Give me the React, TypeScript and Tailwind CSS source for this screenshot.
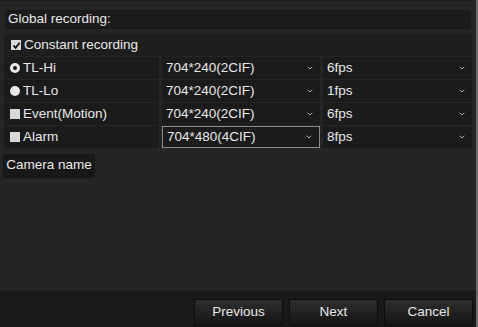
import { ChevronDown } from "lucide-react";

function Box({ checked }: { checked?: boolean }) {
  return (
    <span className="w-[10px] h-[10px] bg-[#d8d8d8] flex items-center justify-center shrink-0">
      {checked && (
        <svg width="9" height="9" viewBox="0 0 9 9">
          <path d="M1.5 4.5 L3.6 6.8 L7.6 1.8" stroke="#111" strokeWidth="1.8" fill="none" />
        </svg>
      )}
    </span>
  );
}

function Radio({ on }: { on?: boolean }) {
  return on ? (
    <span className="w-[10px] h-[10px] rounded-full bg-[#e8e8e8] flex items-center justify-center shrink-0">
      <span className="w-[4px] h-[4px] rounded-full bg-[#151515]" />
    </span>
  ) : (
    <span className="w-[10px] h-[10px] rounded-full bg-[#e8e8e8] shrink-0" />
  );
}

function Select({ value, active }: { value: string; active?: boolean }) {
  return (
    <div
      className={
        "h-full flex items-center justify-between pl-[4px] pr-[6px] bg-[#1b1b1b] " +
        (active ? "border border-[#8a8a8a]" : "")
      }
    >
      <span>{value}</span>
      <ChevronDown size={8} strokeWidth={3} className="text-[#aaaaaa]" />
    </div>
  );
}

export default function App() {
  const rows = [
    { icon: <Radio on />, label: "TL-Hi", res: "704*240(2CIF)", fps: "6fps" },
    { icon: <Radio />, label: "TL-Lo", res: "704*240(2CIF)", fps: "1fps" },
    { icon: <Box />, label: "Event(Motion)", res: "704*240(2CIF)", fps: "6fps" },
    { icon: <Box />, label: "Alarm", res: "704*480(4CIF)", fps: "8fps", active: true },
  ];

  return (
    <div
      className="w-[478px] h-[327px] bg-[#252525] text-[#e8e8e8] text-[13.5px] flex flex-col overflow-hidden border-r-2 border-[#6a6a6a]"
      style={{ fontFamily: '"Liberation Sans", Arial, sans-serif' }}
    >
      <div className="flex-1 flex flex-col pt-[9px] px-[4px] border-t border-[#1c1c1c]">
        <div className="h-[19px] mx-[1px] bg-[#1b1b1b] rounded-[2px] flex items-center pl-[3px]">
          Global recording:
        </div>
        <div className="h-[22px] mt-[5px] bg-[#1e1e1e] flex items-center gap-[3px] pl-[7px]">
          <Box checked />
          <span>Constant recording</span>
        </div>
        <div className="flex flex-col gap-[1px] mt-[1px]">
          {rows.map((r) => (
            <div key={r.label} className="h-[22px] grid grid-cols-[155px_158px_1fr] gap-[3px]">
              <div className="bg-[#1b1b1b] flex items-center gap-[3px] pl-[6px]">
                {r.icon}
                <span>{r.label}</span>
              </div>
              <Select value={r.res} active={r.active} />
              <Select value={r.fps} />
            </div>
          ))}
        </div>
        <div className="mt-[6px] -ml-[1px] w-[92px] h-[23px] bg-[#181818] rounded-[2px] flex items-center justify-center shadow-[0_1px_1px_rgba(0,0,0,0.5)]">
          Camera name
        </div>
      </div>
      <div className="h-[37px] bg-[#191919] border-t border-[#202020] flex items-start justify-end gap-[6px] pt-[8px] pr-[3px]">
        {["Previous", "Next", "Cancel"].map((b) => (
          <div
            key={b}
            className="w-[89px] h-[27px] rounded-[2px] border border-[#0c0c0c] bg-gradient-to-b from-[#2e2e2e] to-[#141414] flex items-center justify-center"
          >
            {b}
          </div>
        ))}
      </div>
    </div>
  );
}
